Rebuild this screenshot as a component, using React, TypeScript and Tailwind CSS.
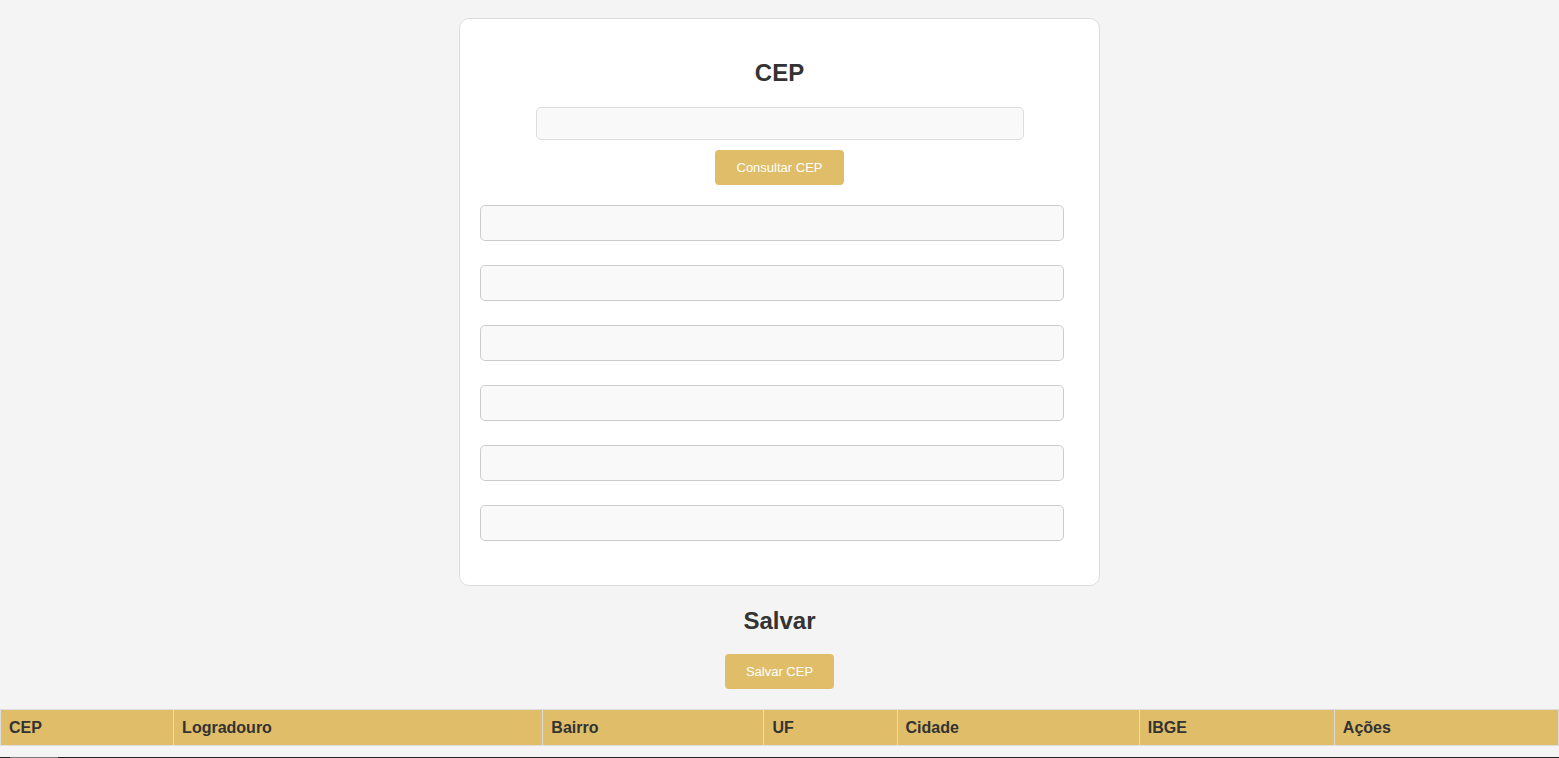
export default function App() {
  const fields = [0, 1, 2, 3, 4, 5];
  const cols = [
    { label: "CEP", w: "w-[173px]" },
    { label: "Logradouro", w: "w-[369px]" },
    { label: "Bairro", w: "w-[221px]" },
    { label: "UF", w: "w-[133px]" },
    { label: "Cidade", w: "w-[242px]" },
    { label: "IBGE", w: "w-[195px]" },
    { label: "Ações", w: "w-[224px]" },
  ];

  return (
    <div className="min-h-[758px] bg-[#f4f4f4] font-['Liberation_Sans',Arial,sans-serif] text-[#333]">
      <div className="pt-[18px] flex flex-col items-center">
        <div className="w-[641px] h-[568px] bg-white border border-[#ddd] rounded-[10px] pl-[20px] pt-[40px] flex flex-col">
          <h2 className="text-[24px] font-bold text-center leading-[28px] pr-[20px]">CEP</h2>
          <div className="flex flex-col items-center pr-[20px]">
            <input className="mt-[20px] w-[488px] h-[33px] bg-[#f9f9f9] border border-[#ddd] rounded-[5px] outline-none" />
            <button className="mt-[10px] w-[129px] h-[35px] bg-[#e0bd68] text-white text-[13px] rounded-[4px]">
              Consultar CEP
            </button>
          </div>
          <div className="mt-[20px] flex flex-col gap-[24px]">
            {fields.map((f) => (
              <input
                key={f}
                className="w-[584px] h-[36px] bg-[#f9f9f9] border border-[#ccc] rounded-[5px] outline-none"
              />
            ))}
          </div>
        </div>
        <h2 className="mt-[21px] text-[24px] font-bold leading-[28px]">Salvar</h2>
        <button className="mt-[19px] w-[109px] h-[35px] bg-[#e0bd68] text-white text-[13px] rounded-[4px]">
          Salvar CEP
        </button>
      </div>
      <table className="mt-[20px] w-full border-collapse">
        <thead>
          <tr className="bg-[#e0bd68]">
            {cols.map((c) => (
              <th
                key={c.label}
                className={`${c.w} h-[36px] border border-[#ddd] text-left px-[8px] text-[16px] font-bold`}
              >
                {c.label}
              </th>
            ))}
          </tr>
        </thead>
      </table>
      <div className="mt-[11px] h-px bg-[#222] flex">
        <div className="ml-[10px] w-[48px] h-px bg-[#777]" />
      </div>
    </div>
  );
}
